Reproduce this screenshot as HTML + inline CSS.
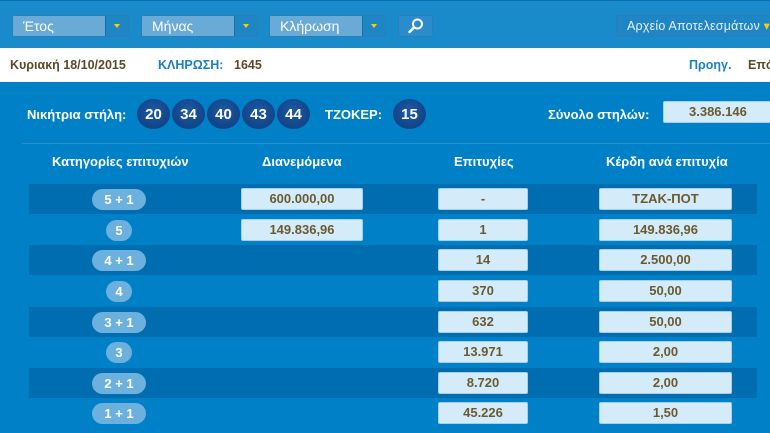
<!DOCTYPE html>
<html><head><meta charset="utf-8"><style>
*{margin:0;padding:0;box-sizing:border-box}
body{width:770px;height:433px;overflow:hidden;font-family:"Liberation Sans",Arial,sans-serif;background:#0080c6;position:relative}
.top{position:absolute;left:0;top:0;width:770px;height:48px;background:#1a8bca;border-top:1px solid #0a6fae}
.dd{position:absolute;top:14px;height:22px;background:#6aaad6;border:1px solid #2a7fb8;border-radius:2px;color:#fff;font-size:14px;line-height:20px;padding-left:10px}
.dd .ar{position:absolute;right:0;top:0;width:23px;height:20px;background:#1f86c6;border-left:1px solid #176fa8}
.dd .ar:after{content:"";position:absolute;left:8px;top:8px;border:3px solid transparent;border-top:4px solid #f5d200}
.white{position:absolute;left:0;top:48px;width:770px;height:34px;background:#fff;font-size:12.5px;font-weight:bold;line-height:34px}
.abs{position:absolute}
.ball{position:absolute;top:99px;width:33px;height:30px;border-radius:50%;background:radial-gradient(circle at 50% 40%,#1d5aa6,#0d3a7a);color:#fff;font-weight:bold;font-size:15px;text-align:center;line-height:31px}
.lbl{position:absolute;color:#fff;font-weight:bold;font-size:13px}
.row{position:absolute;left:29px;width:728px;height:30px}
.dark{background:#006db0}
.pill{position:absolute;top:5px;height:21px;border-radius:11px;background:#6cb1dd;color:#fff;font-weight:bold;font-size:13px;text-align:center;line-height:21px}
.box{position:absolute;top:4px;height:22px;background:#d4ecfa;border:1px solid #a9cfe8;border-radius:2px;color:#6a5a30;font-weight:bold;font-size:13px;text-align:center;line-height:20px}
</style></head><body>
<div class="top">
<div class="dd" style="left:12px;width:117px">Έτος<div class="ar"></div></div>
<div class="dd" style="left:141px;width:117px">Μήνας<div class="ar"></div></div>
<div class="dd" style="left:269px;width:117px">Κλήρωση<div class="ar"></div></div>
<div class="dd" style="left:398px;width:35px;background:#2a8ccb;padding:0">
<svg width="33" height="20" viewBox="0 0 33 20"><circle cx="18.5" cy="8" r="4.5" fill="none" stroke="#fff" stroke-width="2"/><path d="M15 11.5 L10.5 16" stroke="#fff" stroke-width="2.5" stroke-linecap="round"/></svg></div>
<div class="dd" style="left:616px;width:170px;background:#1f86c6;font-size:12.5px;padding-left:10px;color:#e8f2fa;letter-spacing:0.2px">Αρχείο Αποτελεσμάτων <span style="color:#f5d200">▾</span></div>
</div>
<div class="white">
<span class="abs" style="left:10px;color:#5a4a2a">Κυριακή 18/10/2015</span>
<span class="abs" style="left:158px;color:#1a80c4">ΚΛΗΡΩΣΗ:</span>
<span class="abs" style="left:234px;color:#5a4a2a">1645</span>
<span class="abs" style="left:689px;color:#1a80c4">Προηγ.</span>
<span class="abs" style="left:748px;color:#5a4a2a">Επόμ.</span>
</div>
<div class="lbl" style="left:27px;top:107px">Νικήτρια στήλη:</div>
<div class="ball" style="left:137px">20</div>
<div class="ball" style="left:172px">34</div>
<div class="ball" style="left:207px">40</div>
<div class="ball" style="left:242px">43</div>
<div class="ball" style="left:277px">44</div>
<div class="lbl" style="left:325px;top:107px">ΤΖΟΚΕΡ:</div>
<div class="ball" style="left:393px">15</div>
<div class="lbl" style="left:548px;top:107px">Σύνολο στηλών:</div>
<div class="box" style="left:663px;top:101px;width:115px;text-align:left;padding-left:25px">3.386.146</div>
<div class="abs" style="left:22px;top:143px;width:748px;height:1px;background:#2a90cf"></div>
<div class="lbl" style="left:52px;top:154px">Κατηγορίες επιτυχιών</div>
<div class="lbl" style="left:262px;top:154px">Διανεμόμενα</div>
<div class="lbl" style="left:454px;top:154px">Επιτυχίες</div>
<div class="lbl" style="left:606px;top:154px">Κέρδη ανά επιτυχία</div>

<div class="row dark" style="top:184px"><div class="pill" style="left:63px;width:54px">5 + 1</div><div class="box" style="left:212px;width:122px">600.000,00</div><div class="box" style="left:409px;width:90px">-</div><div class="box" style="left:570px;width:133px">ΤΖΑΚ-ΠΟΤ</div></div>
<div class="row" style="top:215px"><div class="pill" style="left:77px;width:26px">5</div><div class="box" style="left:212px;width:122px">149.836,96</div><div class="box" style="left:409px;width:90px">1</div><div class="box" style="left:570px;width:133px">149.836,96</div></div>
<div class="row dark" style="top:245px"><div class="pill" style="left:63px;width:54px">4 + 1</div><div class="box" style="left:409px;width:90px">14</div><div class="box" style="left:570px;width:133px">2.500,00</div></div>
<div class="row" style="top:276px"><div class="pill" style="left:77px;width:26px">4</div><div class="box" style="left:409px;width:90px">370</div><div class="box" style="left:570px;width:133px">50,00</div></div>
<div class="row dark" style="top:307px"><div class="pill" style="left:63px;width:54px">3 + 1</div><div class="box" style="left:409px;width:90px">632</div><div class="box" style="left:570px;width:133px">50,00</div></div>
<div class="row" style="top:337px"><div class="pill" style="left:77px;width:26px">3</div><div class="box" style="left:409px;width:90px">13.971</div><div class="box" style="left:570px;width:133px">2,00</div></div>
<div class="row dark" style="top:368px"><div class="pill" style="left:63px;width:54px">2 + 1</div><div class="box" style="left:409px;width:90px">8.720</div><div class="box" style="left:570px;width:133px">2,00</div></div>
<div class="row" style="top:398px"><div class="pill" style="left:63px;width:54px">1 + 1</div><div class="box" style="left:409px;width:90px">45.226</div><div class="box" style="left:570px;width:133px">1,50</div></div>
</body></html>
